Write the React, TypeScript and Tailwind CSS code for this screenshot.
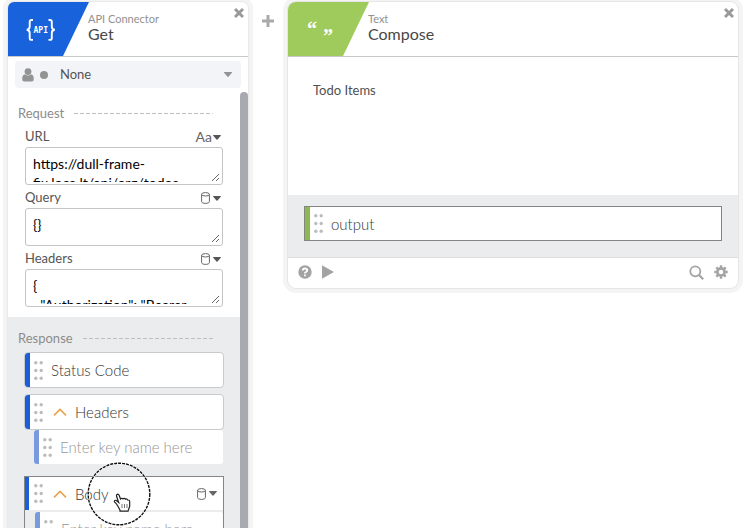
import React from "react";

function Caret({ className = "" }: { className?: string }) {
  return (
    <svg viewBox="0 0 10 6" className={`h-[5px] w-[8px] ${className}`} aria-hidden="true">
      <path d="M0.6 0h8.8q.9 0 .3.8L5.6 5.6q-.6.6-1.2 0L.3.8Q-.3 0 .6 0Z" fill="currentColor" />
    </svg>
  );
}

function Cylinder() {
  return (
    <svg viewBox="0 0 9 12" className="h-[12px] w-[9px]" fill="none" stroke="currentColor" aria-hidden="true">
      <ellipse cx="4.5" cy="2.3" rx="3.9" ry="1.7" />
      <path d="M.6 2.3v7.4c0 .9 1.7 1.7 3.9 1.7s3.9-.8 3.9-1.7V2.3" />
    </svg>
  );
}

function Close() {
  return (
    <button aria-label="Close" className="mt-1.5 mr-1 h-[10px] w-[10px] shrink-0 self-start text-[#999]">
      <svg viewBox="0 0 10 10" className="h-full w-full" stroke="currentColor" strokeWidth="2.9" aria-hidden="true">
        <path d="M1 1l8 8M9 1L1 9" />
      </svg>
    </button>
  );
}

function Dots() {
  return (
    <svg viewBox="0 0 9 19" className="h-[19px] w-[9px] shrink-0" fill="#bcbcbc" aria-hidden="true">
      {[1.8, 9.5, 17.2].map((y) => (
        <g key={y}>
          <circle cx="1.8" cy={y} r="1.7" />
          <circle cx="7.2" cy={y} r="1.7" />
        </g>
      ))}
    </svg>
  );
}

function Chevron() {
  return (
    <svg viewBox="0 0 14 8" className="h-[8px] w-[14px] shrink-0" fill="none" stroke="#e9a550" strokeWidth="1.7" aria-hidden="true">
      <path d="M1 7.3L7 1.4l6 5.9" />
    </svg>
  );
}

function CardHeader({ kind, title, color, children }: { kind: string; title: string; color: string; children: React.ReactNode }) {
  return (
    <header className="flex h-[55px] shrink-0 border-b border-[#c9c9c9]">
      <svg viewBox="0 0 81 54" className="h-[54px] w-[80px] shrink-0 overflow-visible" preserveAspectRatio="xMinYMin slice" aria-hidden="true">
        <path d="M0 0h81L55 54H0Z" fill={color} />
        {children}
      </svg>
      <div className="min-w-0 flex-1 pt-2.5">
        <p className="text-[11px] leading-[14px] text-[#929292]">{kind}</p>
        <h2 className="text-[16px] leading-[15px] text-[#484848]">{title}</h2>
      </div>
      <Close />
    </header>
  );
}

function SectionTitle({ children }: { children: React.ReactNode }) {
  return (
    <div className="flex items-center gap-2.5 pr-[27px] pl-2.5">
      <h3 className="text-[13px] leading-[16px] text-[#8c8c8c]">{children}</h3>
      <svg className="h-px flex-1" aria-hidden="true">
        <line x1="0" y1="0.5" x2="100%" y2="0.5" stroke="#bfbfbf" strokeDasharray="4 2" />
      </svg>
    </div>
  );
}

function Field({ id, label, value, text }: { id: string; label: string; value: string; text?: boolean }) {
  return (
    <div>
      <div className="flex h-[20px] items-center justify-between pr-0.5 text-[13px] text-[#555]">
        <label htmlFor={id}>{label}</label>
        <button aria-label={`${label} type`} className="flex items-center gap-[3px] text-[#666]">
          {text ? <span className="-mr-0.5 text-[14px] leading-[16px]">Aa</span> : <Cylinder />}
          <Caret className="text-[#555]" />
        </button>
      </div>
      <div className="h-[38px] rounded-[3px] border border-[#c4c4c4] bg-white p-0.5">
        <textarea
          id={id}
          defaultValue={value}
          spellCheck={false}
          className="block h-full w-full overflow-hidden px-[5px] pt-1 text-[14px] leading-[19px] text-black outline-none"
        />
      </div>
    </div>
  );
}

function KeyInput({ id }: { id: string }) {
  return (
    <div className="ml-2.5 flex h-[34px] items-center rounded-[3px] border-l-[5px] border-[#7a9ade] bg-white pl-1">
      <Dots />
      <input
        id={id}
        aria-label="Key name"
        placeholder="Enter key name here"
        className="ml-2 w-full min-w-0 text-[15px] font-light text-[#333] outline-none placeholder:text-[#969696]"
      />
    </div>
  );
}

export default function App() {
  return (
    <main className="flex h-screen items-start overflow-hidden bg-white pt-0.5 pr-[18px] pl-2 font-['Lato',sans-serif]">
      <section className="flex h-full w-[240px] shrink-0 flex-col rounded-t-[6px] bg-white shadow-[0_0_0_1px_#e9e9e9,0_0_0_5px_#f4f4f4]">
        <div className="flex min-h-0 flex-1 flex-col overflow-hidden rounded-t-[6px]">
          <CardHeader kind="API Connector" title="Get" color="#1862dc">
            <g fill="none" stroke="#fff" strokeWidth="1.9">
              <path d="M25 18h-1.500q-1.800 0-1.800 2v4.500q0 3-3 3.300q3 .3 3 3.300v4.800q0 2 1.800 2H25" />
              <path d="M40.500 18H42q1.800 0 1.800 2v4.500q0 3 3 3.300q-3 .3-3 3.300v4.800q0 2-1.800 2h-1.500" />
            </g>
            <text x="25.500" y="31" fill="#fff" fontFamily="DejaVu Sans Mono" fontWeight="700" fontSize="8">API</text>
          </CardHeader>
          <button className="mx-[7px] mt-1 flex h-[27px] shrink-0 items-center rounded-[4px] bg-[#f3f4f7] pr-2 pl-[7px] text-[#939393]">
            <svg viewBox="0 0 12 14" className="h-[14px] w-[12px]" fill="currentColor" aria-hidden="true">
              <circle cx="6" cy="3.600" r="3.400" />
              <path d="M3 6.300Q6 8.800 9 6.300q2.800.7 2.800 4.700 0 2.600-2 2.600H2.200q-2 0-2-2.600 0-4 2.800-4.700Z" />
            </svg>
            <span className="ml-1.5 h-[8px] w-[8px] rounded-full bg-current" />
            <span className="ml-3 flex-1 text-left text-[13px] leading-[19px] text-[#555]">None</span>
            <Caret className="w-[10px]" />
          </button>
          <div className="mt-1 flex min-h-0 flex-1">
            <div className="min-w-0 flex-1">
              <div className="pt-[13px] pb-2.5">
                <SectionTitle>Request</SectionTitle>
                <div className="mt-1.5 flex flex-col gap-[3px] px-[17px]">
                  <Field id="url" label="URL" text value={"https://dull-frame-\nfix.loca.lt/api/org/todos"} />
                  <Field id="query" label="Query" value="{}" />
                  <Field id="headers" label="Headers" value={'{\n  "Authorization": "Bearer'} />
                </div>
              </div>
              <div className="bg-[#ebecee] pt-[13px]">
                <SectionTitle>Response</SectionTitle>
                <div className="mt-1.5 flex flex-col px-4">
                  <div className="flex h-[36px] items-center overflow-hidden rounded-[4px] border border-[#c9cacc] bg-white">
                    <span className="h-full w-[5px] bg-[#1b5fd6]" />
                    <span className="ml-1 flex"><Dots /></span>
                    <span className="ml-2 text-[15px] leading-[20px] font-light text-[#333]">Status Code</span>
                  </div>
                  <div className="mt-1.5 flex h-[36px] items-center overflow-hidden rounded-[4px] border border-[#c9cacc] bg-white">
                    <span className="h-full w-[5px] bg-[#1b5fd6]" />
                    <span className="ml-1 flex"><Dots /></span>
                    <button className="ml-2.5 flex items-center gap-2 text-[15px] leading-[20px] font-light text-[#333]"><Chevron />Headers</button>
                  </div>
                  <div className="pr-px"><KeyInput id="header-key" /></div>
                  <div className="relative mt-3 h-[80px] border border-[#858585] bg-[#ebecee]">
                    <div className="flex h-[33px] items-center bg-white">
                      <span className="h-full w-[4px] bg-[#1b5fd6]" />
                      <span className="ml-[5px] flex"><Dots /></span>
                      <button className="ml-2.5 flex flex-1 items-center gap-2 text-[15px] leading-[20px] font-light text-[#333]"><Chevron />Body</button>
                      <button aria-label="Body type" className="mr-1.5 flex items-center gap-[3px] text-[#666]"><Cylinder /><Caret /></button>
                    </div>
                    <div className="mt-0.5"><KeyInput id="body-key" /></div>
                    <svg viewBox="0 0 64 64" className="pointer-events-none absolute top-[-15px] left-[62px] h-[64px] w-[64px]" fill="none" aria-hidden="true">
                      <circle cx="32" cy="32" r="30.800" stroke="#fff" strokeWidth="2" />
                      <circle cx="32" cy="32" r="30.800" stroke="#111" strokeWidth="1.400" strokeDasharray="3 1" />
                      <path d="M33 48l-2.500-4.500q-1.500-2.500-3-3.500q-.5-2 1.500-1.700l2.700 2.200-2.200-6.500q-.2-1.700 1-1.900 1.200 0 1.700 1.400l1.300 3.500q1-1.300 2.500-.1 1.200-1.200 2.500.3 1.500-.8 2.300.8 1.800-.2 1.900 1.700v4.500l-1.700 5H33Z" fill="#fff" stroke="#222" strokeWidth="1.200" />
                      <path d="M35 42v4M37.500 42v4M40 42v4" stroke="#777" />
                    </svg>
                  </div>
                </div>
              </div>
            </div>
            <div className="w-[8px] shrink-0 rounded-t-[4px] bg-[#a8aaaf]" />
          </div>
        </div>
      </section>

      <button aria-label="Add" className="mx-3.5 mt-[13px] h-[12px] w-[12px] shrink-0 text-[#aaa]">
        <svg viewBox="0 0 12 12" className="h-full w-full" stroke="currentColor" strokeWidth="3" aria-hidden="true">
          <path d="M6 0v12M0 6h12" />
        </svg>
      </button>

      <section className="min-w-0 flex-1 overflow-hidden rounded-[8px] bg-white shadow-[0_0_0_1px_#e6e6e6,0_0_0_5px_#f4f4f4]">
        <CardHeader kind="Text" title="Compose" color="#9fcb5d">
          <text x="19" y="34" fill="#fff" fontFamily="Liberation Serif" fontWeight="700" fontSize="20">“</text>
          <text x="35" y="41" fill="#fff" fontFamily="Liberation Serif" fontWeight="700" fontSize="20">”</text>
        </CardHeader>
        <p className="h-[138px] px-[25px] pt-6 text-[13px] leading-[18px] text-[#505050]">Todo Items</p>
        <div className="border-b border-[#dedede] bg-[#ebecee] px-4 pt-[11px] pb-4">
          <div className="flex h-[35px] items-center border border-[#858585] bg-white">
            <span className="h-full w-[5px] bg-[#8bbb4f]" />
            <span className="ml-1 flex"><Dots /></span>
            <span className="ml-2 text-[15px] leading-[20px] font-light text-[#333]">output</span>
          </div>
        </div>
        <footer className="flex h-[30px] items-center px-2.5 pb-0.5 text-[#a3a3a3]">
          <button aria-label="Help">
            <svg viewBox="0 0 14 14" className="h-[14px] w-[14px]" aria-hidden="true">
              <circle cx="7" cy="7" r="6.700" fill="currentColor" />
              <path d="M4.700 5.500Q4.900 3.500 7 3.500t2.300 1.800Q9.300 6.400 8 7t-1 1.500" fill="none" stroke="#fff" strokeWidth="1.800" />
              <path d="M6.100 9.500h1.800v1.700H6.100Z" fill="#fff" />
            </svg>
          </button>
          <button aria-label="Run" className="ml-2.5">
            <svg viewBox="0 0 12 14" className="h-[14px] w-[12px]" aria-hidden="true"><path d="M0 .3L12 7 0 13.700Z" fill="currentColor" /></svg>
          </button>
          <button aria-label="Search" className="ml-auto">
            <svg viewBox="0 0 15 15" className="h-[15px] w-[15px]" fill="none" stroke="currentColor" aria-hidden="true">
              <circle cx="6.300" cy="6.300" r="5" strokeWidth="1.800" />
              <path d="M10 10l4.200 4.200" strokeWidth="2.200" />
            </svg>
          </button>
          <button aria-label="Settings" className="ml-2.5">
            <svg viewBox="0 0 14 14" className="h-[14px] w-[14px]" fill="none" stroke="currentColor" aria-hidden="true">
              <circle cx="7" cy="7" r="3.600" strokeWidth="2.600" />
              <path d="M7 .3v2.200M7 11.500v2.200M.3 7h2.200M11.500 7h2.200M2.300 2.300l1.500 1.500M10.200 10.200l1.500 1.500M11.700 2.300l-1.500 1.500M3.800 10.200l-1.500 1.500" strokeWidth="2.400" />
            </svg>
          </button>
        </footer>
      </section>
    </main>
  );
}
